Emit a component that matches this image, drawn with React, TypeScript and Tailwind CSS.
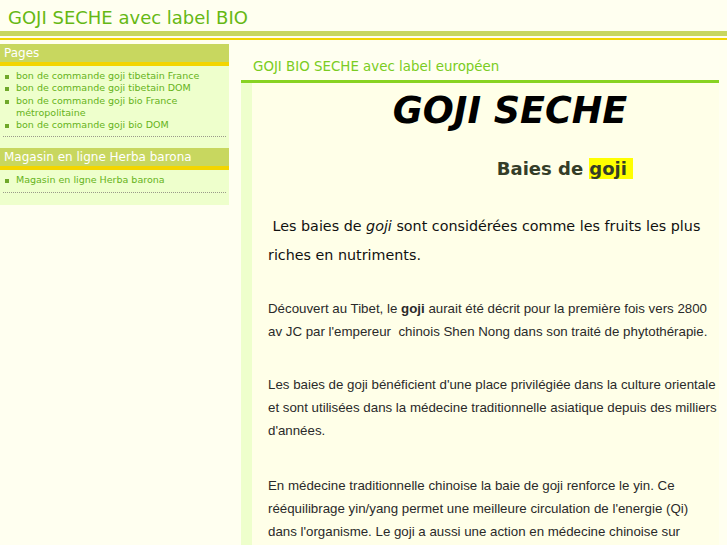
import React from "react";

const pages = [
  "bon de commande goji tibetain France",
  "bon de commande goji tibetain DOM",
  "bon de commande goji bio France métropolitaine",
  "bon de commande goji bio DOM",
];

const shops = ["Magasin en ligne Herba barona"];

function SideBlock({ title, items }: { title: string; items: string[] }) {
  return (
    <div>
      {/* Block header with yellow underline */}
      <div className="h-[22px] bg-[#c8d75f] border-b-4 border-[#f3d500] pl-1 text-[12px] leading-[18px] text-white">
        {title}
      </div>
      <ul className="mx-[3px] pt-[4px] pb-[5px] border-b border-dotted border-[#9a9a8a]">
        {items.map((item) => (
          <li key={item} className="flex text-[9.5px] leading-[12.3px] text-[#66b31a]">
            <span className="w-[13px] shrink-0 flex pl-[2px] pt-[5px]">
              <span className="block w-[4px] h-[4px] bg-[#6fa82a]" />
            </span>
            <span>{item}</span>
          </li>
        ))}
      </ul>
    </div>
  );
}

export default function App() {
  return (
    <div className="h-[545px] overflow-hidden bg-[#fffff0] font-['DejaVu_Sans',sans-serif]">
      {/* Site title */}
      <div className="h-[31px] pt-[9px] pl-2 text-[18px] leading-none text-[#66b814]">
        GOJI SECHE avec label BIO
      </div>
      <div className="h-[5px] bg-[#c8d75f]" />
      <div className="h-[2px]" />
      <div className="h-[2px] bg-[#f3d500]" />

      <div className="flex gap-3 pt-1">
        {/* Sidebar */}
        <aside className="w-[229px] shrink-0 self-start bg-[#eeffcc] pb-[12px] flex flex-col gap-[11px]">
          <SideBlock title="Pages" items={pages} />
          <SideBlock title="Magasin en ligne Herba barona" items={shops} />
        </aside>

        {/* Main column */}
        <main className="w-[478px] shrink-0">
          <h2 className="h-[36px] pt-[15px] pl-3 text-[13.4px] leading-[16px] font-normal text-[#7acc22]">
            GOJI BIO SECHE avec label européen
          </h2>
          <div className="h-[3px] bg-[#88d322]" />
          <div className="h-[500px] border-l-[11px] border-[#eeffcc] bg-[#ffffe8] pt-[8px]">
            <div className="pl-[49px] text-center text-[36.5px] leading-[40px] font-bold italic text-black">
              GOJI SECHE
            </div>
            <div className="mt-[26px] pl-[159px] text-center text-[18px] leading-[24px] font-bold text-[#343d28]">
              Baies de <span className="bg-[#ffff00]">goji&nbsp;</span>
            </div>
            <div className="pl-4">
              <p className="mt-[31px] text-[14.3px] leading-[29px] text-[#111]">
                &nbsp;Les baies de <i>goji</i> sont considérées comme les fruits les plus riches en nutriments.
              </p>
              <div className="font-['Liberation_Sans',sans-serif] text-[13.3px] leading-[23px] text-[#2a2a2a] whitespace-nowrap">
                <p className="mt-[27px]">
                  Découvert au Tibet, le <b>goji</b> aurait été décrit pour la première fois vers 2800
                  <br />
                  av JC par l'empereur&nbsp; chinois Shen Nong dans son traité de phytothérapie.
                </p>
                <p className="mt-[30px]">
                  Les baies de goji bénéficient d'une place privilégiée dans la culture orientale
                  <br />
                  et sont utilisées dans la médecine traditionnelle asiatique depuis des milliers
                  <br />
                  d'années.
                </p>
                <p className="mt-[32px]">
                  En médecine traditionnelle chinoise la baie de goji renforce le yin. Ce
                  <br />
                  rééquilibrage yin/yang permet une meilleure circulation de l'energie (Qi)
                  <br />
                  dans l'organisme. Le goji a aussi une action en médecine chinoise sur
                </p>
              </div>
            </div>
          </div>
        </main>
      </div>
    </div>
  );
}
